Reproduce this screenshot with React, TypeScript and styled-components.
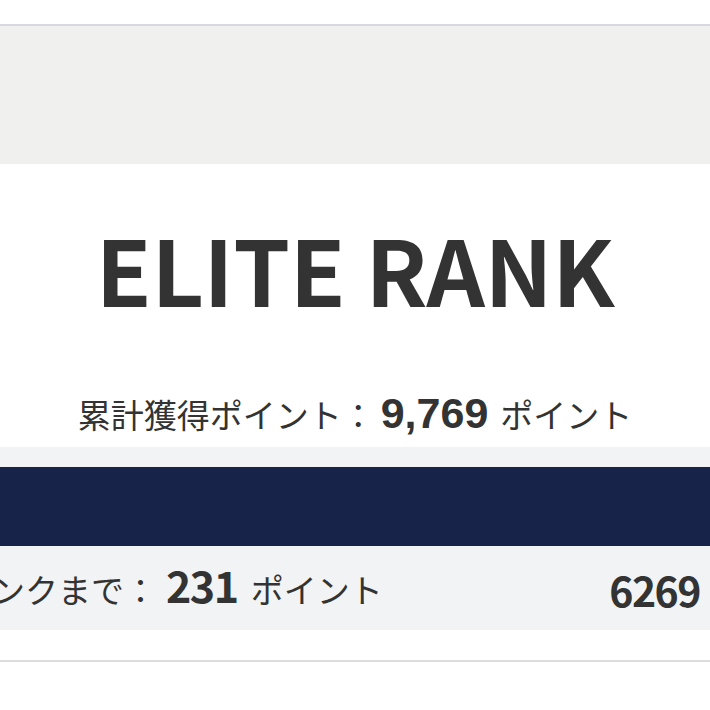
import React from "react";
import styled, { createGlobalStyle } from "styled-components";

const Global = createGlobalStyle`
  html, body { margin: 0; padding: 0; background: #ffffff; overflow: hidden; }
  body { font-family: "Noto Sans CJK JP", "Noto Sans", sans-serif; color: #333333; }
`;

const Page = styled.div`
  width: 710px;
  height: 710px;
  display: flex;
  flex-direction: column;
  background: #ffffff;
  overflow: hidden;
`;

const TopGap = styled.div`
  height: 24px;
  flex: none;
`;

const Banner = styled.div`
  height: 138px;
  flex: none;
  border-top: 2px solid #d9d8e0;
  background: #f0f0ee;
`;

const RankSection = styled.section`
  height: 283px;
  flex: none;
  display: flex;
  flex-direction: column;
  align-items: center;
  background: #ffffff;
`;

const RankTitle = styled.h1`
  margin: 44px 0 0;
  font-family: "Noto Sans CJK JP", sans-serif;
  font-weight: 700;
  font-size: 91px;
  line-height: 1.3;
  color: #333333;
  letter-spacing: -0.4px;
`;

const Total = styled.p`
  margin: 57px 0 0;
  font-size: 33px;
  line-height: 1.4;
  color: #333333;
  display: flex;
  align-items: baseline;
`;

const TotalValue = styled.span`
  margin: 0 12px 0 6px;
  font-family: "Liberation Sans", Arial, sans-serif;
  font-weight: 700;
  font-size: 43px;
`;

const Progress = styled.div`
  flex: none;
  background: #f2f3f5;
  padding-top: 20px;
  display: flex;
  flex-direction: column;
`;

const Bar = styled.div`
  height: 79px;
  background: #18234a;
`;

const NextRow = styled.div`
  height: 84px;
  display: flex;
  align-items: center;
  justify-content: space-between;
  padding-right: 10px;
`;

const NextLabel = styled.span`
  margin: 0 0 8px -8px;
  font-size: 33px;
  line-height: 1.4;
  display: flex;
  align-items: baseline;
`;

const NextValue = styled.span`
  margin: 0 13px 0 9px;
  font-weight: 700;
  font-size: 43px;
  letter-spacing: -1.5px;
`;

const Count = styled.span`
  margin-top: 4px;
  font-weight: 700;
  font-size: 41px;
  line-height: 1.4;
  letter-spacing: -1.5px;
`;

const Footer = styled.div`
  margin-top: 30px;
  border-top: 2px solid #dcdcdc;
`;

export default function App() {
  return (
    <Page>
      <Global />
      <TopGap />
      <Banner />
      <RankSection>
        <RankTitle>ELITE RANK</RankTitle>
        <Total>
          <span>累計獲得ポイント：</span>
          <TotalValue>9,769</TotalValue>
          <span>ポイント</span>
        </Total>
      </RankSection>
      <Progress>
        <Bar />
        <NextRow>
          <NextLabel>
            <span>ンクまで：</span>
            <NextValue>231</NextValue>
            <span>ポイント</span>
          </NextLabel>
          <Count>6269</Count>
        </NextRow>
      </Progress>
      <Footer />
    </Page>
  );
}
